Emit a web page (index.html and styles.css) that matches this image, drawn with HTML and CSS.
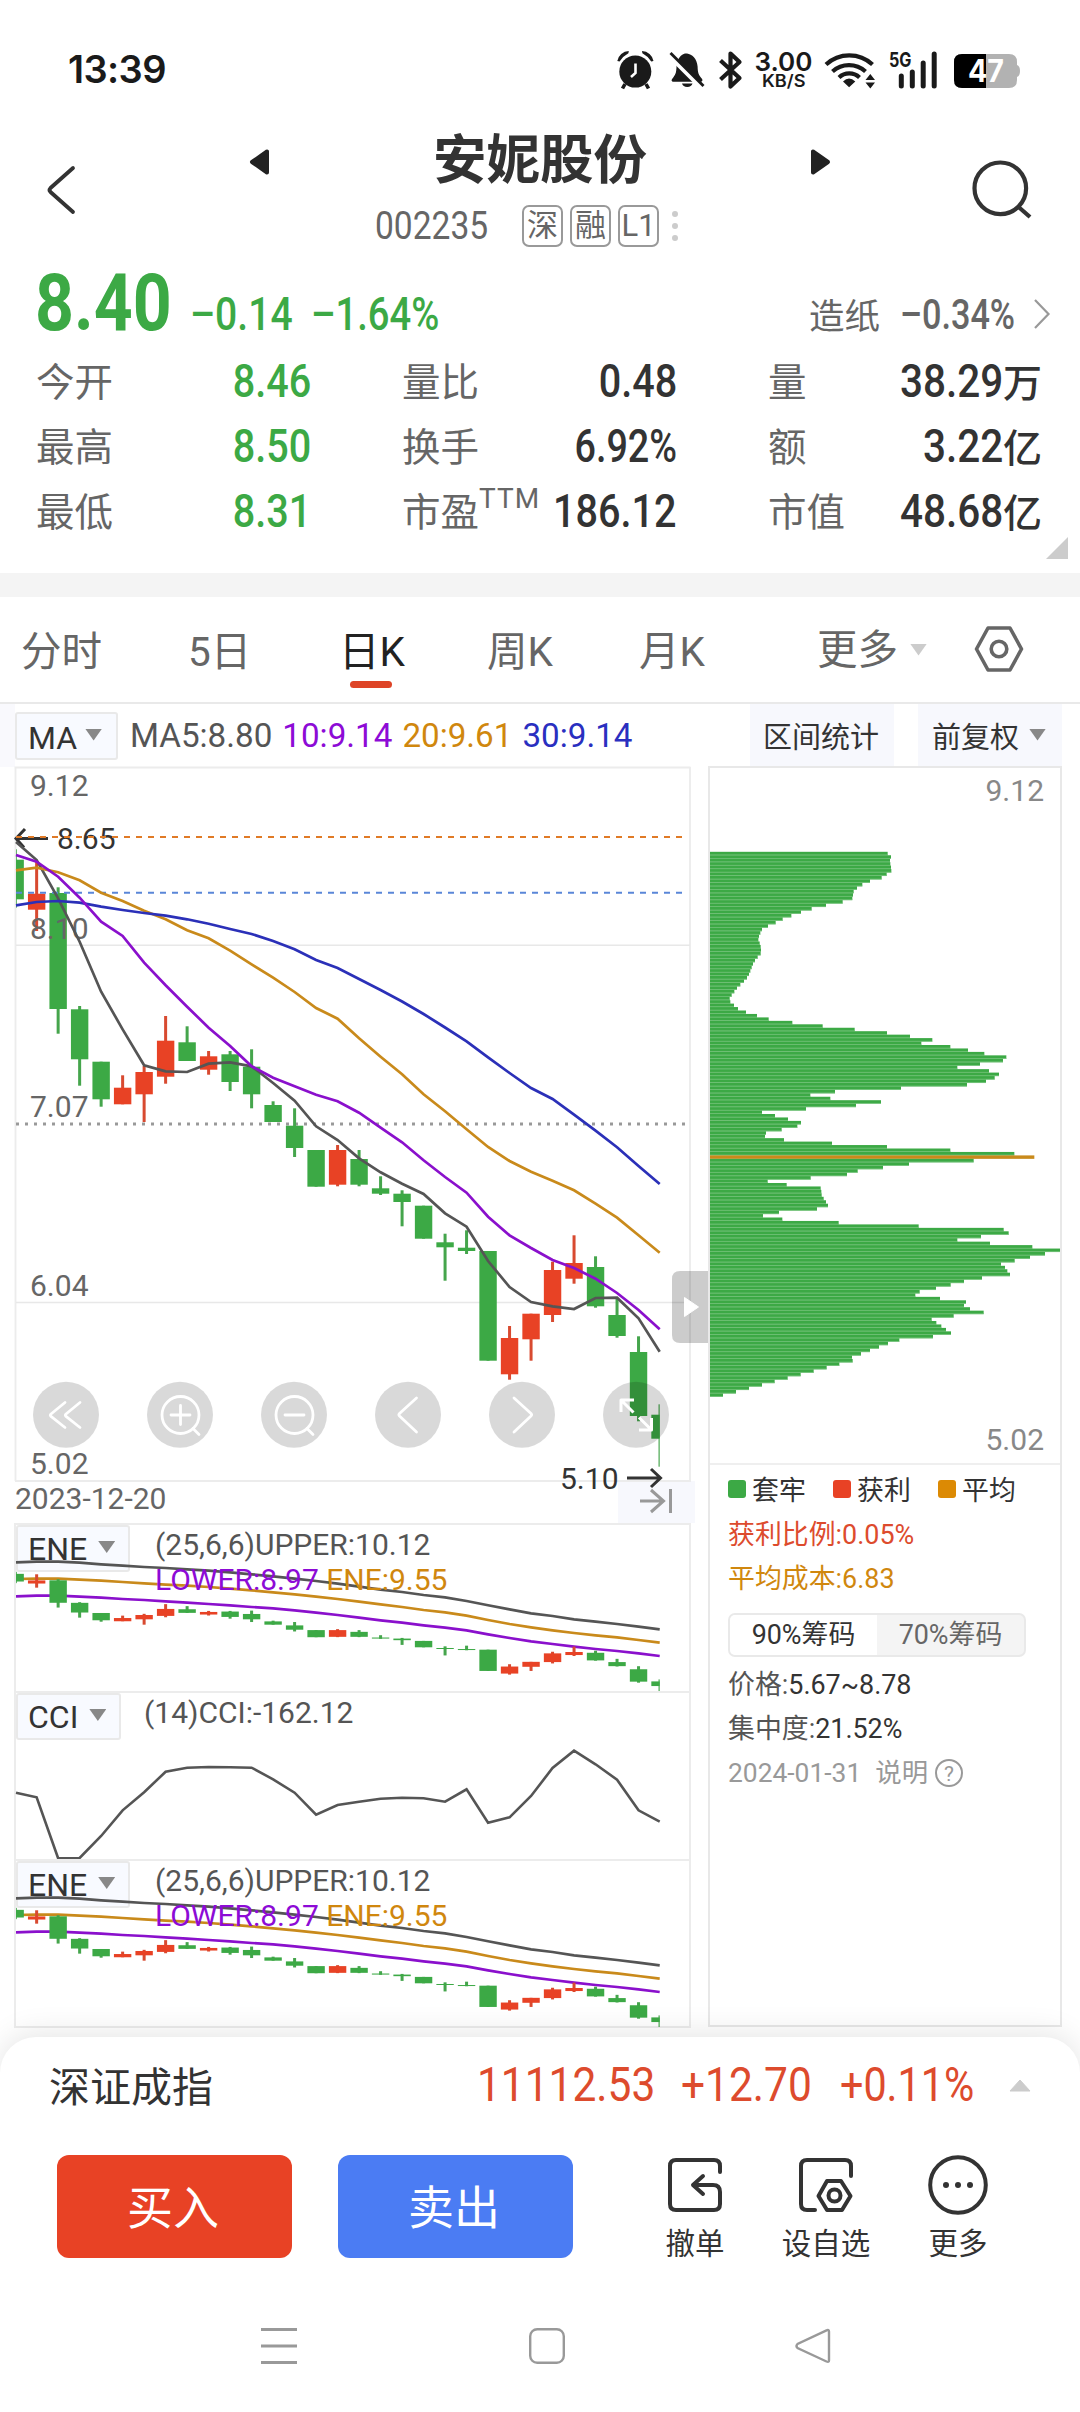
FILE: index.html
```html
<!DOCTYPE html>
<html lang="zh-CN">
<head>
<meta charset="utf-8">
<title>安妮股份 002235</title>
<link rel="stylesheet" href="styles.css">
</head>
<body>
<div class="screen">
  <header class="status">
    <span class="clock">13:39</span>
    <div class="status-icons">
      <svg width="412" height="44" viewBox="612 48 412 44">
        <g fill="#1a1a1a">
          <circle cx="635.3" cy="71.6" r="16"/>
          <path d="M617.3 61a12 12 0 0 1 11.500-10l-.4 2.200a22 22 0 0 0-8.800 8.400zM653.500 61a12 12 0 0 0-11.500-10l.4 2.200a22 22 0 0 1 8.800 8.400z"/>
          <path d="M625 84l-2.500 4.500M646 84l2.500 4.500" stroke="#1a1a1a" stroke-width="3.600"/>
          <path d="M635.500 63.500v9.500l-4.500 4" fill="none" stroke="#fff" stroke-width="2.600"/>
          <path d="M687 53.500c5 .8 10 5 10.600 13 .2 7 1 8 4.500 12.500.8 1.500 0 2.700-1.200 2.700h-27.800c-1.500 0-2-1.500-1-2.700 3.500-4.500 4.200-6 4.400-12.500.6-8 5-12.200 8.500-13zM682 83.500h10.500a5.400 4.500 0 0 1-10.500 0z"/>
          <path d="M668 54.500l33.500 33.500" stroke="#fff" stroke-width="4.500"/>
          <path d="M670.500 53l33 33" stroke="#1a1a1a" stroke-width="2.800"/>
        </g>
        <path d="M720.500 60.500l19 17.500-9 8.500v-33l9 8.500-19 17.500" fill="none" stroke="#1a1a1a" stroke-width="4.200" stroke-linejoin="round"/>
        <g fill="none" stroke="#1a1a1a" stroke-width="4.200">
          <path d="M826 64.500a34 34 0 0 1 46.500 0M832.500 71.500a24.500 24.500 0 0 1 33 0M839 77.500a15 15 0 0 1 20.500 0"/>
        </g>
        <path d="M843 81.500q6-6 12.300 0l-6.200 5.700zM865.500 80h9.500l-4.700-6zM865.500 82.500h9.500l-4.700 6z" fill="#1a1a1a"/>
        <path d="M901.300 76v10M912.300 72v14M923.200 63v23M934.200 54v32" stroke="#1a1a1a" stroke-width="5" stroke-linecap="round"/>
        <path d="M962 54h47q8 0 8 8v3q3 1 3 6t-3 6v3q0 8-8 8h-47q-8 0-8-8v-18q0-8 8-8z" fill="#b2b2b2"/>
        <path d="M986 54h-24q-8 0-8 8v18q0 8 8 8h24z" fill="#000"/>
        <g font-family="Inter, sans-serif" fill="#1a1a1a">
          <text x="754.500" y="71" font-size="26" font-weight="600" textLength="58" lengthAdjust="spacingAndGlyphs">3.00</text>
          <text x="762" y="87" font-size="17" font-weight="600" textLength="43.500" lengthAdjust="spacingAndGlyphs">KB/S</text>
          <text x="889" y="66.500" font-size="20" font-weight="700" textLength="22.500" lengthAdjust="spacingAndGlyphs">5G</text>
          <text x="968" y="82" font-size="31" font-weight="700" fill="#fff" textLength="36" lengthAdjust="spacingAndGlyphs">47</text>
        </g>
      </svg>
    </div>
  </header>

  <section class="titlebar">
    <svg class="back" width="40" height="60" viewBox="40 160 40 60"><path d="M73 168L50.500 188q-2 2 0 4L73 212" fill="none" stroke="#333" stroke-width="3.800" stroke-linecap="round"/></svg>
    <svg class="prev" width="24" height="30" viewBox="0 0 24 30"><path d="M19 4.500v21L4 15z" fill="#222" stroke="#222" stroke-width="4" stroke-linejoin="round"/></svg>
    <div class="stock">
      <h1>安妮股份</h1>
      <div class="code-row">
        <span class="code"><span class="num">002235</span></span>
        <span class="tag">深</span><span class="tag">融</span><span class="tag">L1</span>
        <svg width="6" height="34" viewBox="0 0 6 34" fill="#ccc"><circle cx="3" cy="5" r="3"/><circle cx="3" cy="17" r="3"/><circle cx="3" cy="29" r="3"/></svg>
      </div>
    </div>
    <svg class="next" width="24" height="30" viewBox="0 0 24 30"><path d="M5 4.500v21L20 15z" fill="#222" stroke="#222" stroke-width="4" stroke-linejoin="round"/></svg>
    <svg class="search" width="64" height="64" viewBox="970 158 64 64"><g fill="none" stroke="#333" stroke-width="4.200"><circle cx="1000.300" cy="188.300" r="25.800"/><path d="M1018 206.500l12 10.500"/></g></svg>
  </section>

  <section class="quote">
    <div class="price-row">
      <span class="price num">8.40</span>
      <span class="change num">–0.14</span>
      <span class="percent num">–1.64%</span>
      <span class="sector">造纸</span>
      <span class="sector-change num">–0.34%</span>
      <svg width="18" height="32" viewBox="0 0 18 32"><path d="M2 2l13.500 14L2 30" fill="none" stroke="#999" stroke-width="2.200"/></svg>
    </div>
    <dl class="stats">
      <div><dt>今开</dt><dd class="num green">8.46</dd></div>
      <div><dt>量比</dt><dd class="num">0.48</dd></div>
      <div><dt>量</dt><dd><span class="num">38.29</span>万</dd></div>
      <div><dt>最高</dt><dd class="num green">8.50</dd></div>
      <div><dt>换手</dt><dd class="num pct">6.92%</dd></div>
      <div><dt>额</dt><dd><span class="num">3.22</span>亿</dd></div>
      <div><dt>最低</dt><dd class="num green">8.31</dd></div>
      <div><dt>市盈<sup>TTM</sup></dt><dd class="num long">186.12</dd></div>
      <div><dt>市值</dt><dd><span class="num">48.68</span>亿</dd></div>
    </dl>
    <i class="expand"></i>
  </section>

  <nav class="tabs">
    <span>分时</span><span>5日</span><span class="active">日K</span><span>周K</span><span>月K</span><span class="more">更多<i class="caret light"></i></span>
    <svg width="50" height="50" viewBox="0 0 50 50"><g fill="none" stroke="#666" stroke-width="3.600" stroke-linejoin="round"><path d="M14 4h22l11.500 21L36 46H14L2.500 25z"/><circle cx="25" cy="25" r="7.800"/></g></svg>
  </nav>

  <section class="legend">
    <div class="picker">MA<i class="caret"></i></div>
    <p class="ma"><span>MA5:8.80</span><span class="purple">10:9.14</span><span class="gold">20:9.61</span><span class="blue">30:9.14</span></p>
    <button class="tool">区间统计</button>
    <button class="tool">前复权<i class="caret"></i></button>
  </section>

  <main class="charts">
    <div class="plots">
      <svg class="kline" width="677" height="714" viewBox="14 767 677 714">
        <path d="M15.500 767v714M14.500 767.500H690.500M690 767v714M15 1481H691" stroke="#ececec" stroke-width="1.800" fill="none"/>
        <path d="M16 945.300H690M16 1302.500H690" stroke="#e8e8e8" stroke-width="1.400"/>
        <path d="M16 1124H688" stroke="#999" stroke-width="3" stroke-dasharray="3 6"/>
        <g id="candles"></g>
        <g class="axis" font-size="30" fill="#666">
          <text x="30" y="796">9.12</text><text x="30" y="938.500">8.10</text><text x="30" y="1117">7.07</text><text x="30" y="1295.500">6.04</text><text x="30" y="1474">5.02</text>
        </g>
        <g class="axis" font-size="30" fill="#333"><text x="57" y="848.700">8.65</text><text x="560" y="1489">5.10</text></g>
        <g fill="none" stroke="#333" stroke-width="3"><path d="M48 838.500H17M25 829l-9 9.500 8 9"/><path d="M627 1478h33M651 1469l9.500 9-9.500 9"/></g>
        <path d="M16 837H688" stroke="#e07a26" stroke-width="2" stroke-dasharray="6 6"/>
        <path d="M16 892.800H688" stroke="#5a86d8" stroke-width="2" stroke-dasharray="6 6"/>
        <g id="averages"></g>
        <g id="controls" fill="none" stroke="#fff" stroke-width="2.800" stroke-linecap="round" stroke-linejoin="round">
          <path d="M65 1402.500L51 1414q-1.200 1.200 0 2.400L65 1427.500M80 1402.500L66 1414q-1.200 1.200 0 2.400L80 1427.500"/>
          <circle cx="180.500" cy="1415" r="18.500"/><path d="M171 1415h19M180.500 1405.500v19M193 1428.500l6 6"/>
          <circle cx="294.500" cy="1415" r="18.500"/><path d="M285 1415h19M307 1428.500l6 6"/>
          <path d="M416.500 1398l-17 15.500q-1.200 1.300 0 2.500l17 16"/>
          <path d="M514 1398l17 15.500q1.200 1.300 0 2.500l-17 16"/>
          <path d="M621 1412v-12h13M621.500 1400.500l12 12M651.500 1418v12H639M651 1429.500l-12-12" stroke-linecap="butt" stroke-width="3"/>
        </g>
        <path d="M708 1271h-28q-8 0-8 8v56q0 8 8 8h28z" fill="#000" fill-opacity=".2"/>
        <path d="M684.500 1297.500v19l14-9.500z" fill="#fff" stroke="#fff"/>
      </svg>
      <div class="dates"><span>2023-12-20</span>
        <div class="to-end"><svg width="34" height="26" viewBox="0 0 34 26"><path d="M1 13h24M12 2l12.500 11L12 24M31.500 1v24" fill="none" stroke="#999" stroke-width="3"/></svg></div>
      </div>
      <div class="panel">
        <div class="picker">ENE<i class="caret"></i></div>
        <svg class="ene" width="677" height="168" viewBox="14 1523 677 168"></svg>
        <p>(25,6,6)UPPER:10.12<br><span class="purple">LOWER:8.97</span> <span class="gold">ENE:9.55</span></p>
      </div>
      <div class="panel">
        <div class="picker">CCI<i class="caret"></i></div>
        <svg class="cci" width="677" height="168" viewBox="14 1691 677 168"></svg>
        <p>(14)CCI:-162.12</p>
      </div>
      <div class="panel last">
        <div class="picker">ENE<i class="caret"></i></div>
        <svg class="ene" width="677" height="168" viewBox="14 1523 677 168"></svg>
        <p>(25,6,6)UPPER:10.12<br><span class="purple">LOWER:8.97</span> <span class="gold">ENE:9.55</span></p>
      </div>
    </div>

    <aside class="chips">
      <svg width="351" height="695" viewBox="710 768 351 695">
        <g id="distribution"></g>
        <g class="axis" font-size="30" fill="#888" text-anchor="end"><text x="1044" y="801">9.12</text><text x="1044" y="1450">5.02</text></g>
      </svg>
      <div class="chip-info">
        <div class="keys"><span><i class="bg-green"></i>套牢</span><span><i class="bg-red"></i>获利</span><span><i class="bg-gold"></i>平均</span></div>
        <p class="red">获利比例:0.05%</p>
        <p class="gold">平均成本:6.83</p>
        <div class="toggle"><span class="on">90%筹码</span><span>70%筹码</span></div>
        <p><em>价格:</em>5.67~8.78</p>
        <p><em>集中度:</em>21.52%</p>
        <p class="note">2024-01-31<span>说明</span><svg width="30" height="30" viewBox="0 0 30 30"><circle cx="15" cy="15" r="13" fill="none" stroke="#999" stroke-width="2"/><text x="15" y="22.500" font-size="21" text-anchor="middle" fill="#999">?</text></svg></p>
      </div>
    </aside>
  </main>

  <footer class="sheet">
    <div class="index">
      <span class="name">深证成指</span>
      <span class="num i1">11112.53</span><span class="num i2">+12.70</span><span class="num i3">+0.11%</span>
      <svg width="22" height="13" viewBox="0 0 22 13"><path d="M11 1L21 12H1z" fill="#ccc" stroke="#ccc"/></svg>
    </div>
    <div class="actions">
      <button class="buy">买入</button>
      <button class="sell">卖出</button>
      <div class="action a1"><svg width="60" height="60" viewBox="0 0 60 60"><g fill="none" stroke="#333" stroke-width="4" stroke-linecap="round" stroke-linejoin="round"><path d="M55 17V11q0-6-6-6H11q-6 0-6 6v38q0 6 6 6h38q6 0 6-6V37q0-7-7-7H28M38 21l-10 9 10 9"/></g></svg>撤单</div>
      <div class="action a2"><svg width="60" height="60" viewBox="0 0 60 60"><g fill="none" stroke="#333" stroke-width="4" stroke-linecap="round" stroke-linejoin="round"><path d="M55 21V11q0-6-6-6H11q-6 0-6 6v38q0 6 6 6h8"/><path d="M31 26h14l9.500 15L46 55H31l-8.500-14z"/><circle cx="38.500" cy="40.500" r="6"/></g></svg>设自选</div>
      <div class="action a3"><svg width="60" height="60" viewBox="0 0 60 60"><circle cx="30" cy="30" r="27.800" fill="none" stroke="#333" stroke-width="4"/><g fill="#333"><circle cx="18" cy="30" r="3"/><circle cx="30" cy="30" r="3"/><circle cx="42" cy="30" r="3"/></g></svg>更多</div>
    </div>
    <div class="system-nav">
      <svg width="36" height="38" viewBox="0 0 36 38"><path d="M0 2.500h36M0 19h36M0 35.500h36" stroke="#999" stroke-width="3"/></svg>
      <svg width="36" height="38" viewBox="0 0 36 38"><rect x="1.200" y="2.200" width="33.600" height="33.600" rx="7" fill="none" stroke="#999" stroke-width="2.400"/></svg>
      <svg width="36" height="38" viewBox="0 0 36 38"><path d="M34 4.500v29q0 2-2.500 1L2.500 21q-2-2 0-4L31.500 3.300q2.500-1 2.500 1.200z" fill="none" stroke="#999" stroke-width="2.400"/></svg>
    </div>
  </footer>
</div>
<script src="charts.js"></script>
</body>
</html>
```
FILE: styles.css
```css
* { box-sizing: border-box; margin: 0; padding: 0; }
body {
  width: 1080px;
  background: #fff;
  color: #333;
  font-family: Roboto, "Noto Sans CJK SC", sans-serif;
  font-weight: 400;
}
svg { display: block; flex: none; }
.axis { font-family: Roboto, sans-serif; }
button { border: 0; font: inherit; color: inherit; }
i, em { font-style: normal; }
.screen { width: 1080px; height: 2412px; overflow: hidden; display: flex; flex-direction: column; }
.green { color: #3ca945; }
.red { color: #dd4b2d; }
.purple { color: #8d0bd6; }
.gold { color: #d0870e; }
.blue { color: #2a2fc0; }
.num { display: inline-block; white-space: nowrap; transform-origin: left center; transform: scaleX(.86); }

.status { height: 130px; padding: 46px 56px 0 68px; display: flex; justify-content: space-between; flex: none; }
.clock { font: 600 38px/46px Inter, sans-serif; color: #1a1a1a; letter-spacing: -.6px; }
.status-icons { padding-top: 2px; }
.status-icons svg { overflow: visible; }

.titlebar { height: 130px; display: flex; flex: none; padding-left: 40px; }
.back { margin-top: 30px; }
.prev { margin: 17px 0 0 168px; }
.stock { width: 536px; padding-left: 103px; padding-top: 1px; }
.stock h1 { font-size: 53.500px; line-height: 60px; font-weight: 700; margin-left: 58px; white-space: nowrap; }
.code-row { display: flex; align-items: center; height: 42px; margin-top: 14px; }
.code { width: 147px; font-size: 39px; color: #666; flex: none; }
.code .num { transform: scaleX(.86); }
.tag { width: 41px; height: 42px; flex: none; margin-right: 7px; border: 2px solid #999; border-radius: 7px; font-size: 31px; line-height: 38px; color: #666; text-align: center; }
.code-row svg { margin-left: 6px; }
.next { margin-top: 17px; }
.search { margin: 28px 0 0 138px; }

.quote { height: 313px; flex: none; }
.price-row { height: 88px; display: flex; align-items: flex-end; padding-left: 35px; color: #3ca945; }
.price-row span { line-height: 48px; }
.price-row .price { font-size: 80px; font-weight: 700; width: 155px; line-height: 90px; height: 90px; transform: scaleX(.85); }
.price-row .change, .price-row .percent { font-size: 46px; font-weight: 500; line-height: 68px; }
.price-row .change { width: 121px; transform: scaleX(.85); }
.price-row .percent { width: 498px; transform: scaleX(.83); }
.price-row .sector { font-size: 35.500px; color: #666; width: 91px; line-height: 61px; }
.price-row .sector-change { font-size: 42px; font-weight: 500; color: #666; width: 133px; line-height: 67px; transform: scaleX(.815); }
.price-row svg { margin-bottom: 18px; }
.stats { display: grid; grid-template-columns: 275px 275px 274px; grid-auto-rows: 65px; column-gap: 91px; padding-left: 36px; margin-top: 2px; }
.stats div { display: flex; justify-content: space-between; align-items: center; white-space: nowrap; }
.stats dt { font-size: 38.500px; color: #666; line-height: 66px; height: 65px; }
.stats sup { font-size: 28px; line-height: 1; vertical-align: 18px; letter-spacing: 1px; }
.stats dd { font-size: 46px; font-weight: 500; line-height: 63px; height: 65px; }
.stats .num { transform-origin: right center; }
.stats .pct { transform: scaleX(.82); }
.stats .long { margin-left: -20px; }
.stats dd:not(.num) { font-size: 39px; }
.stats dd .num { font-size: 46px; transform: scaleX(.88); }
.expand { display: block; width: 22px; height: 22px; margin: -8px 0 0 1046px; background: #ccc; clip-path: polygon(100% 0, 100% 100%, 0 100%); }

.tabs { height: 131px; border-top: 24px solid #f4f4f4; border-bottom: 2px solid #e9e9e9; display: flex; flex: none; padding-left: 21px; font-size: 40.500px; color: #666; }
.tabs span { line-height: 110px; height: 105px; white-space: nowrap; position: relative; }
.tabs span:nth-child(1) { width: 167px; }
.tabs span:nth-child(2) { width: 151px; }
.tabs span:nth-child(3) { width: 148px; }
.tabs span:nth-child(4) { width: 152px; }
.tabs span:nth-child(5) { width: 178px; }
.tabs .more { display: flex; align-items: center; width: 157px; }
.tabs .active { color: #222; }
.tabs .active::after { content: ""; position: absolute; left: 11px; top: 84px; width: 42px; height: 7px; border-radius: 4px; background: #de4427; }
.tabs svg { margin-top: 27px; }
.caret { display: inline-block; width: 17px; height: 12px; background: #888; clip-path: polygon(0 0, 100% 0, 50% 100%); margin-left: 9px; flex: none; }
.caret.light { background: #ccc; margin-left: 12px; }

.legend { height: 63px; flex: none; display: flex; align-items: center; border-left: 15px solid #f9f9fd; }
.picker { height: 48px; padding: 0 13px; border: 2px solid #e9e9e9; border-radius: 3px; background: #f8faff; display: flex; align-items: center; font-size: 32px; flex: none; }
.legend .picker { width: 103px; padding: 4px 11px 0 11px; }
.legend .picker .caret { margin-top: -6px; margin-left: 8px; }
.ma { display: flex; gap: 10px; font-size: 33.200px; color: #555; margin-left: 12px; width: 620px; flex: none; white-space: nowrap; }
.tool { width: 144px; height: 63px; flex: none; background: #f7f8fd; font-size: 29px; white-space: nowrap; margin-right: 24px; display: flex; align-items: center; justify-content: center; padding: 0 2px 1px 0; }
.tool .caret { margin-left: 10px; margin-top: -1px; }

.charts { height: 1270px; flex: none; display: grid; grid-template-columns: 677px 354px; column-gap: 17px; padding-left: 14px; }
.plots { display: flex; flex-direction: column; }
.kline { position: relative; z-index: 1; overflow: visible; }
.dates { height: 42px; flex: none; display: flex; justify-content: space-between; align-items: flex-start; font-size: 30px; line-height: 35px; color: #666; padding-left: 1px; margin-right: -4px; }
.to-end { width: 77px; height: 42px; background: #f7f8fd; padding: 7px 0 0 21px; }
.panel { height: 168px; flex: none; display: grid; border: solid #ececec; border-width: 2px 2px 0; }
.panel.last { height: 169px; border-bottom-width: 2px; }
.panel > * { grid-area: 1 / 1; }
.panel svg { margin: -2px 0 0 -2px; overflow: hidden; }
.panel .picker { justify-self: start; margin: 0; height: 47px; padding: 0 13px 0 10px; }
.panel .caret { margin: -3px 0 0 11px; }
.panel p { font-size: 30px; line-height: 34.600px; color: #555; margin-left: 139px; white-space: nowrap; z-index: 1; padding-top: 3px; }
.panel:nth-child(4) p { margin-left: 128px; }

.chips { height: 1261px; border: 2px solid #e8e8e8; margin-top: -1px; }
.chip-info { border-top: 2px solid #efefef; padding: 0 0 0 18px; font-size: 26.900px; }
.keys { display: flex; height: 48px; padding-bottom: 1px; align-items: center; }
.keys span { width: 105px; display: flex; align-items: center; gap: 6px; white-space: nowrap; }
.keys i { width: 18px; height: 18px; border-radius: 3px; }
.bg-green { background: #3ca945; }
.bg-red { background: #e84225; }
.bg-gold { background: #dc8a04; }
.chip-info p { height: 44px; line-height: 45px; white-space: nowrap; }
.chip-info em { color: #555; }
.toggle { width: 298px; height: 44px; margin: 12px 0 6px; border: 2px solid #e9e9e9; border-radius: 7px; background: #f4f4f4; display: grid; grid-template-columns: 1fr 1fr; text-align: center; line-height: 40px; color: #666; overflow: hidden; }
.toggle .on { background: #fff; color: #333; }
.chip-info .note { color: #999; display: flex; align-items: center; font-size: 26.400px; }
.note span { margin: 0 6px 0 14px; }

.sheet { height: 375px; flex: none; background: #fff; border-radius: 36px 36px 0 0; box-shadow: 0 -4px 30px rgba(0, 0, 0, .1); position: relative; z-index: 2; }
.index { height: 98px; display: flex; align-items: center; padding: 0 0 3px 49px; color: #dd4b2d; font-size: 48px; }
.index .name { font-size: 41px; color: #333; width: 428px; margin-top: -2px; }
.index .num { transform: scaleX(.885); }
.index svg { margin-top: 1px; }
.i1 { width: 204px; }
.i2 { width: 159px; }
.index .i3 { width: 169px; transform: scaleX(.86); }
.actions { height: 126px; display: flex; padding: 20px 0 0 57px; }
.buy, .sell { width: 235px; height: 103px; border-radius: 12px; color: #fff; font-size: 46px; background: #e84225; flex: none; line-height: 107px; padding-right: 3px; }
.sell { margin-left: 46px; background: #4b7cf3; }
.action { width: 100px; display: flex; flex-direction: column; align-items: center; font-size: 29.500px; white-space: nowrap; line-height: 34px; gap: 12px; }
.a1 { margin-left: 72px; }
.a2 { margin-left: 31px; }
.a3 { margin-left: 32px; }
.system-nav { display: flex; padding: 66px 0 0 261px; gap: 232px; }
.system-nav svg:last-child { margin-left: -2px; }
```
FILE: charts.js
```js
// Pixel-space series for the daily chart: [wickTop, bodyTop, bodyBottom, wickBottom, rising]
const candles = [
  [849.3,859.7,899.3,907.7,0],[862,893.7,909.7,931,1],[887.3,893,1009,1033.7,0],[1006,1009.3,1059.3,1085.7,0],
  [1061.7,1061.7,1099.3,1106.7,0],[1075.3,1087.7,1104.3,1104.3,1],[1066,1072,1094.3,1122,1],[1016,1040.7,1076.7,1083.7,1],
  [1026.3,1042.3,1061,1061,0],[1051,1056.3,1069.7,1074.7,1],[1051,1054.3,1082,1091,0],[1049.3,1066.7,1094.3,1108.3,0],
  [1101.3,1105,1122,1122,0],[1108.3,1125.7,1148,1157,0],[1150,1150,1186.7,1186.7,0],[1145,1150,1184.7,1186.3,1],
  [1150,1159,1184.7,1186.3,0],[1176.3,1188.3,1193.7,1195,0],[1190.3,1193.7,1202,1226.3,0],[1205.7,1205.7,1238.7,1238.7,0],
  [1233.7,1242.3,1247.3,1280.7,0],[1230.3,1247.7,1251,1254,0],[1251,1251,1360.7,1360.7,0],[1326,1338,1374.3,1379.7,1],
  [1313.7,1313.7,1339.3,1360.7,1],[1261.7,1270,1315,1322,1],[1235.3,1263,1278.7,1283.7,1],[1256.3,1267,1306.3,1307.7,0],
  [1298.3,1315,1336,1337.7,0],[1336.3,1352,1416,1421.3,0],[1404.3,1414.7,1438.7,1466.7,0]
];
const ma = {
  "#555555": [842,860,898.3,941.7,991.7,1029.3,1065.3,1071.3,1072,1063.7,1062.3,1066.3,1083,1100.7,1126.3,1140,1158.3,1172.3,1183.7,1194,1213.3,1226.7,1261,1287,1302,1306.3,1309,1298,1297.7,1318.3,1351.7],
  "#c98a1b": [870.3,867.7,872.3,880.3,892.7,901,910.7,919.3,930.3,938.3,950.7,964.3,977.7,992,1008,1018.7,1038.3,1056.7,1074.3,1094.3,1111.3,1129.3,1147,1161,1171.7,1180.7,1190.3,1203.7,1217.7,1235.3,1252.7],
  "#2b30b8": [905.3,902,901,902.7,906.7,910,913,915.7,919.3,923.7,929,934,941,949.3,960,968,979,990,1001.5,1014,1027.5,1041.3,1057.3,1073,1088,1099,1114.7,1130.7,1147.3,1166,1184],
  "#8a10cc": [855,861.7,876.7,897.7,921.7,936,962.7,985.3,1006.7,1027.7,1046,1066.3,1077.7,1086.3,1094.7,1101.3,1112.7,1127.7,1142.3,1160.3,1177,1192.7,1216.7,1235.3,1248,1260,1268,1278.7,1293,1310,1329.3]
};
const third = base => v => base + v / 3;
const ene = {
  "#555555": [607,605,605,608,613,617,621,624,628,632,637,643,649,656,663,671,680,689,696,705,712,723,736,748,760,768,778,785,792,800,808].map(third(1360)),
  "#c98a1b": [657,656,656,659,662,666,670,674,677,681,686,691,697,703,710,717,725,733,741,750,757,767,780,792,802,811,819,826,832,840,848].map(third(1360)),
  "#8a10cc": [709,707,707,710,713,717,720,724,728,732,736,741,745,751,758,765,773,781,788,796,803,811,823,834,844,852,860,867,873,880,888].map(third(1360))
};
const cci = [338,352,535,534,468,391,337,275,263,261,262,263,298,338,404,375,365,356,353,355,365,328,428,412,348,264,212,253,299,391,425].map(third(1680));
const chips = [533,543,540,541,543,544,530,515,480,457,441,431,429,427,398,348,305,273,244,218,197,174,156,151,147,145,149,152,153,152,143,135,129,125,121,117,111,102,91,81,73,65,59,61,72,84,108,141,176,247,338,434,531,600,667,634,721,774,823,889,879,810,742,837,867,854,828,771,573,375,301,361,513,438,288,156,195,234,273,262,215,168,165,222,366,531,721,913,973,791,597,519,443,411,302,173,230,332,334,335,341,348,354,321,207,159,217,386,626,881,896,813,742,840,967,1050,1005,960,914,873,885,892,900,816,762,722,678,629,616,690,768,762,780,821,731,665,679,694,708,723,669,568,534,507,480,453,426,428,388,350,311,272,233,194,156,117,78,39];

const GREEN = "#3ca945", RED = "#e84225", LEFT = 16, RIGHT = 659.7;
const cx = i => 15.15 + 21.496 * i;
const rect = (x, y, w, h, c) => {
  const x0 = Math.max(x, LEFT), x1 = Math.min(x + w, RIGHT);
  return `<rect x="${x0}" y="${y}" width="${Math.max(x1 - x0, .8)}" height="${h}" fill="${c}"/>`;
};
const drawCandles = (map, minBody) => candles.map(([wt, bt, bb, wb, up], i) => {
  const c = up ? RED : GREEN;
  return rect(cx(i) - 1.5, map(wt), 3, map(wb) - map(wt), up ? "#d84a30" : "#45a54c") +
    rect(cx(i) - 8.7, map(bt), 17.4, Math.max(map(bb) - map(bt), minBody), c);
}).join("");
const line = (ys, c, w) =>
  `<polyline points="${ys.map((y, i) => `${i ? Math.min(cx(i), RIGHT) : LEFT},${y.toFixed(1)}`).join(" ")}" fill="none" stroke="${c}" stroke-width="${w}"/>`;
const drawLines = (set, w) => Object.entries(set).map(([c, ys]) => line(ys, c, w)).join("");

document.getElementById("candles").innerHTML = drawCandles(v => v, 2);
document.getElementById("averages").innerHTML = drawLines(ma, 2.7);
document.getElementById("controls").insertAdjacentHTML("afterbegin",
  [0, 1, 2, 3, 4, 5].map(k => `<circle cx="${66 + 114 * k}" cy="1414.700" r="33" fill="#000" fill-opacity=".15" stroke="none"/>`).join(""));
document.querySelectorAll(".ene").forEach(s => {
  s.innerHTML = drawLines(ene, 2.7) + drawCandles(v => 1580.3 + (v - 893) * .1938, 1);
});
document.querySelector(".cci").innerHTML = line(cci, "#555555", 2.6);
document.getElementById("distribution").innerHTML = chips.map((v, k) => {
  const y = 851.8 + k * 3.45, w = v / 3, avg = k === 88;
  return `<rect x="710" y="${y.toFixed(2)}" width="${w}" height="3.45" fill="${avg ? "#c98a1b" : "#3ca945"}"/>` +
    (avg ? "" : `<rect x="710" y="${(y + 2.75).toFixed(2)}" width="${w}" height=".8" fill="#7cc682"/>`);
}).join("");
```
